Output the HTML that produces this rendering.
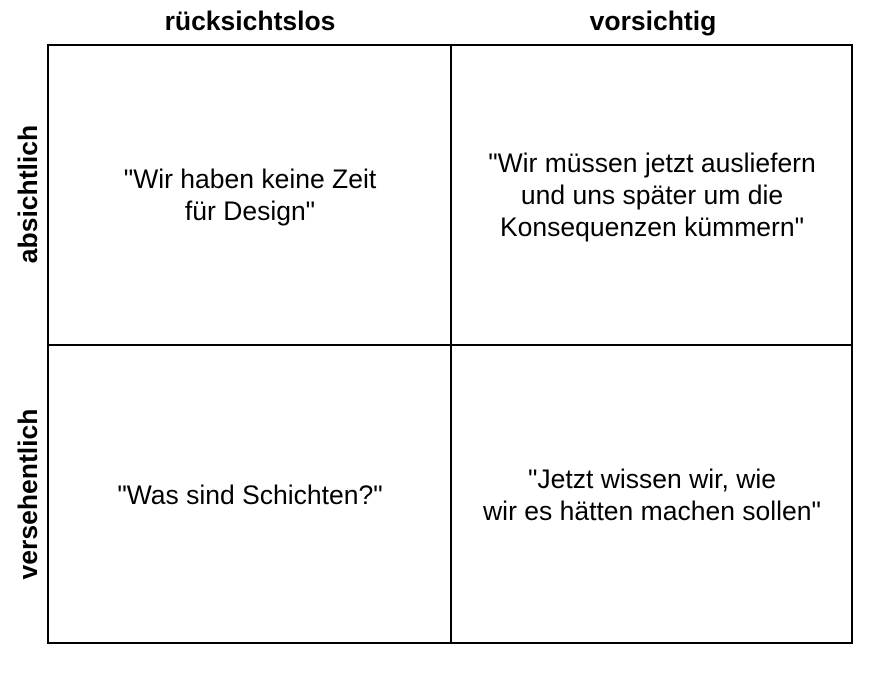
<!DOCTYPE html>
<html><head><meta charset="utf-8"><style>
body{margin:0;width:886px;height:673px;background:#fff;font-family:"Liberation Sans",Arial,sans-serif;color:#000;position:relative;overflow:hidden}
.h{position:absolute;top:8px;font-weight:bold;font-size:26.5px;line-height:26px;text-align:center;width:404px}
.v{position:absolute;font-weight:bold;font-size:26.5px;line-height:26px;width:300px;text-align:center;transform:rotate(-90deg);transform-origin:center}
.grid{position:absolute;left:47px;top:44px;width:806px;height:600px;border:2px solid #000;box-sizing:border-box}
.c{position:absolute;display:flex;align-items:center;justify-content:center;text-align:center;font-size:26.5px;line-height:32px;width:402px;height:300px}
.lv{position:absolute;left:450px;top:44px;width:2px;height:600px;background:#000}
.lh{position:absolute;left:47px;top:344px;width:806px;height:2px;background:#000}
</style></head><body>
<div class="h" style="left:48px">rücksichtslos</div>
<div class="h" style="left:451px">vorsichtig</div>
<div class="v" style="left:-122px;top:181px">absichtlich</div>
<div class="v" style="left:-122px;top:481px">versehentlich</div>
<div class="grid"></div>
<div class="lv"></div><div class="lh"></div>
<div class="c" style="left:49px;top:45px">"Wir haben keine Zeit<br>für Design"</div>
<div class="c" style="left:451px;top:45px">"Wir müssen jetzt ausliefern<br>und uns später um die<br>Konsequenzen kümmern"</div>
<div class="c" style="left:49px;top:345px">"Was sind Schichten?"</div>
<div class="c" style="left:451px;top:345px">"Jetzt wissen wir, wie<br>wir es hätten machen sollen"</div>
</body></html>
